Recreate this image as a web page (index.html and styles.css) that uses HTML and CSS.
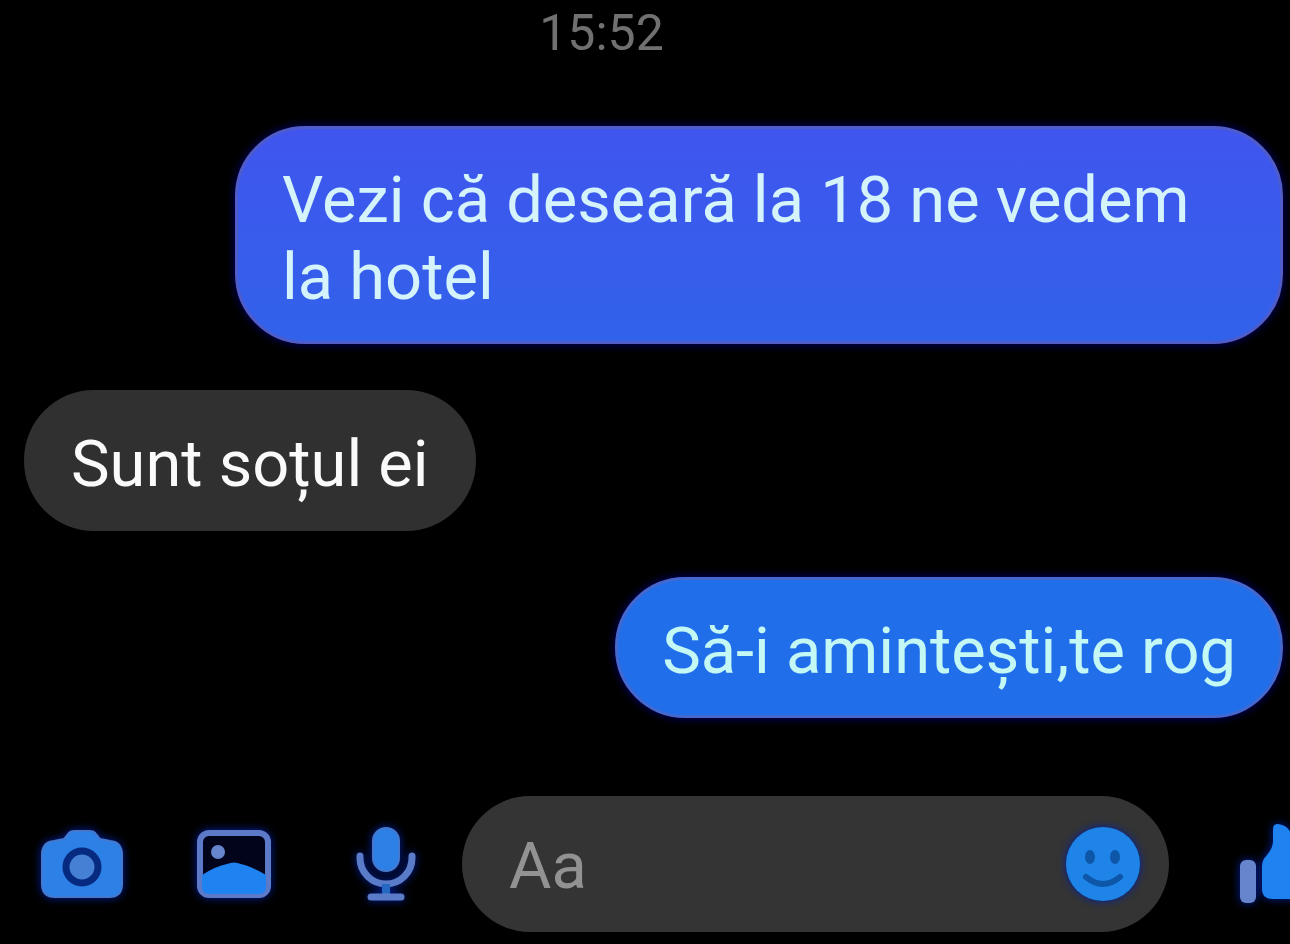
FILE: index.html
```html
<!DOCTYPE html>
<html lang="ro">
<head>
  <meta charset="UTF-8" />
  <meta name="viewport" content="width=device-width, initial-scale=1.0"/>
  <title>Chat</title>
  <link rel="stylesheet" href="styles.css">
</head>
<body>
  <main class="chat">
    <time class="timestamp" datetime="15:52">15:52</time>
    <div class="message sent violet">Vezi că deseară la 18 ne vedem la hotel</div>
    <div class="message received">Sunt soțul ei</div>
    <div class="message sent">Să-i amintești,te rog</div>
  </main>

  <form class="composer">
    <button type="button" class="tool" aria-label="Cameră">
      <svg width="84" height="70" viewBox="0 0 84 70">
        <path class="solid" d="M14 12L24 10L28 5Q30 2 35 2H49Q54 2 56 5L60 10L70 12Q82 13 82 26V55Q82 68 69 68H15Q2 68 2 55V26Q2 13 14 12Z"/>
        <circle class="lens" cx="42" cy="38" r="16"/>
      </svg>
    </button>
    <button type="button" class="tool" aria-label="Galerie">
      <svg width="76" height="70" viewBox="0 0 76 70">
        <rect class="frame" x="4" y="4" width="68" height="62" rx="9"/>
        <path class="fill" d="M6 46Q20 37 31 35Q38 32 45 35Q57 38 70 46V58Q70 65 63 65H13Q6 65 6 58Z"/>
        <circle class="pale" cx="22" cy="23" r="7"/>
      </svg>
    </button>
    <button type="button" class="tool" aria-label="Microfon">
      <svg width="60" height="76" viewBox="0 0 60 76">
        <rect class="solid" x="17" y="2" width="26" height="43" rx="13"/>
        <path class="arc" d="M4 30V32A26 26 0 0 0 56 32V30"/>
        <path class="stem" d="M30 58V70"/>
        <path class="arc" d="M15 71H45"/>
      </svg>
    </button>

    <div class="field">
      <input type="text" placeholder="Aa" aria-label="Mesaj">
      <button type="button" class="emoji" aria-label="Emoji">
        <svg width="76" height="76" viewBox="0 0 76 76">
          <circle class="face" cx="38" cy="38" r="37"/>
          <ellipse class="eye" cx="25" cy="31" rx="5" ry="7"/>
          <ellipse class="eye" cx="50" cy="31" rx="5" ry="7"/>
          <path class="smile" d="M21 51Q38 65 55 51"/>
        </svg>
      </button>
    </div>

    <button type="button" class="like" aria-label="Îmi place">
      <svg width="80" height="82" viewBox="0 0 80 82">
        <rect class="pale" x="0" y="37" width="16" height="43" rx="6"/>
        <path class="fill" d="M22 43Q22 37 27 32Q34 24 33 15V6Q33 1 38 1Q52 3 52 18L51 30H70Q79 31 78 39Q80 45 76 50Q77 57 72 61Q72 67 67 70Q66 76 57 76H33Q22 76 22 66Z"/>
      </svg>
    </button>
  </form>
</body>
</html>
```
FILE: styles.css
```css
* {
  box-sizing: border-box;
}

body {
  margin: 0;
  background: #000;
  font-family: Roboto, sans-serif;
  overflow-x: hidden;
}

.chat {
  display: flex;
  flex-direction: column;
  gap: 46px;
  padding: 0 7px 0 24px;
}

.timestamp {
  margin: 0 104px 14px 0;
  color: #707070;
  font-size: 50px;
  line-height: 66px;
  text-align: center;
}

.message {
  max-width: 1048px;
  padding: 36px 47px 28px;
  border-radius: 70px;
  font-size: 65px;
  line-height: 77px;
}

.sent {
  align-self: flex-end;
  padding: 33px 44px 25px;
  border: 3px solid #4568cc;
  background: #206eea;
  color: #c4f8f4;
  box-shadow: 0 0 10px #000078;
}

.violet {
  border-color: #505cc8;
  background: linear-gradient(#4055ee, #3162ea);
  color: #d4f3fa;
}

.received {
  align-self: flex-start;
  background: #303030;
  color: #fafafa;
}

/* the like button runs off the right edge */
.composer {
  display: flex;
  align-items: center;
  margin: 78px -30px 12px 6px;
}

button {
  display: flex;
  flex: none;
  align-items: center;
  justify-content: center;
  padding: 0;
  border: none;
  background: none;
  cursor: pointer;
}

svg {
  display: block;
  overflow: visible;
  filter: drop-shadow(0 0 4px #0020a0);
}

.tool {
  width: 152px;
}

.field {
  display: flex;
  flex: 1;
  align-items: center;
  min-width: 0;
  height: 136px;
  padding: 0 28px 0 47px;
  border-radius: 68px;
  background: #343434;
}

.field input {
  flex: 1;
  min-width: 0;
  padding: 4px 0 0;
  border: none;
  outline: none;
  background: none;
  color: #fafafa;
  font-family: inherit;
  font-size: 65px;
  line-height: 77px;
}

.field input::placeholder {
  color: #929292;
  opacity: 1;
}

.like {
  margin-left: 71px;
}

.solid {
  fill: #2c80e6;
  stroke: #4579ce;
  stroke-width: 2;
}

.fill {
  fill: #1e82f0;
}

.pale {
  fill: #6685cc;
}

.lens {
  fill: #4580d4;
  stroke: #062a80;
  stroke-width: 7;
}

.frame {
  fill: #02041c;
  stroke: #5c7ac8;
  stroke-width: 6;
}

.arc {
  fill: none;
  stroke: #5a7cc8;
  stroke-width: 7;
  stroke-linecap: round;
}

.stem {
  stroke: #2468c4;
  stroke-width: 8;
}

.face {
  fill: #1f84e8;
}

.eye {
  fill: #0d56a8;
}

.smile {
  fill: none;
  stroke: #0d56a8;
  stroke-width: 6;
  stroke-linecap: round;
}
```
